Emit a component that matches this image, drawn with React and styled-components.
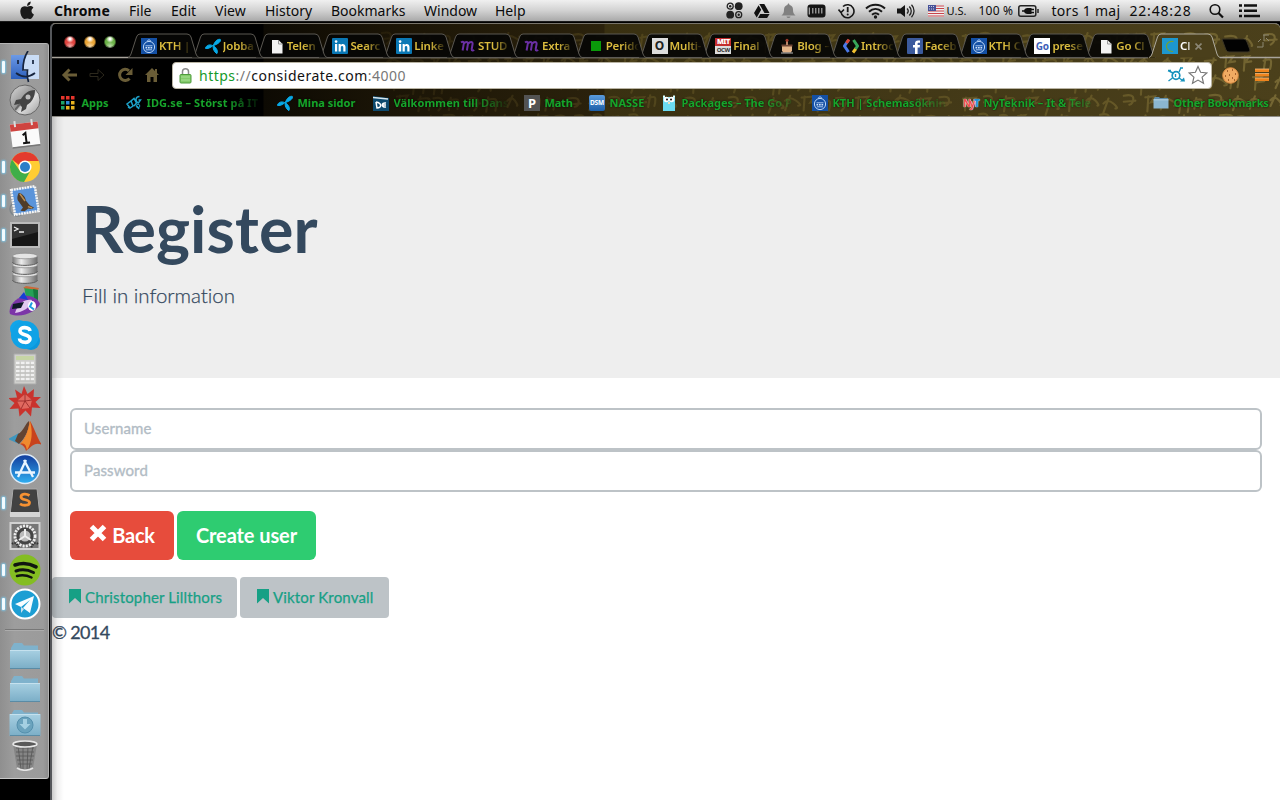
import React from "react";
import styled, { createGlobalStyle } from "styled-components";

const Global = createGlobalStyle`
  *{box-sizing:border-box}
  html,body{margin:0;padding:0;background:#000;overflow:hidden}
  svg{display:block;flex:none}
`;
const ui = `"Noto Sans","Open Sans",sans-serif`;
const lato = `Lato,"Liberation Sans",sans-serif`;

const Screen = styled.div`width:1280px;height:800px;background:#000;display:flex;flex-direction:column;overflow:hidden;`;

/* ---------- menu bar ---------- */
const MenuBar = styled.header`
  height:22px;flex:none;display:flex;align-items:center;padding-left:19px;
  background:linear-gradient(#f0f0f0,#d2d2d2 50%,#a9a9a9);border-bottom:1px solid #1b1b1b;
  font:14px/21px ${ui};color:#0b0b0b;
`;
const Slot = styled.div`
  width:${p => p.$w}px;flex:none;white-space:nowrap;display:flex;align-items:center;height:21px;
  font-size:${p => p.$size || 14}px;font-weight:${p => (p.$bold ? 700 : 400)};letter-spacing:${p => p.$ls || 0}px;
`;

/* ---------- desktop ---------- */
const Desktop = styled.div`flex:1;display:flex;min-height:0;`;
const DockColumn = styled.div`width:50px;flex:none;padding-top:21px;`;
const Dock = styled.nav`
  width:49px;height:736px;padding-top:6px;background:linear-gradient(90deg,#8f8f8f,#9d9d9d 30%,#9b9b9b 90%,#8d8d8d);
  border-top:1px solid #b5b5b5;border-right:1px solid #b2b2b2;border-bottom:1px solid #c8c8c8;
  border-radius:0 3px 3px 0;display:flex;flex-direction:column;
`;
const DockItem = styled.div`height:33.55px;flex:none;display:flex;align-items:center;`;
const Running = styled.i`
  width:3px;height:12px;margin:0 4px 0 2px;border-radius:1px;
  background:${p => (p.$on ? "#f2fbff" : "transparent")};box-shadow:${p => (p.$on ? "0 0 2px 1px #7cc4e4" : "none")};
`;
const DockRule = styled.div`height:17.6px;display:flex;align-items:center;padding:0 4px 0 5px;
  &::after{content:"";height:1px;flex:1;background:#777;box-shadow:0 1px #acacac;}`;

/* ---------- browser window ---------- */
const Window = styled.main`
  width:1230px;margin-top:1px;border-left:2px solid #55575b;border-top:1px solid #77736a;border-radius:5px 5px 0 0;
  display:flex;flex-direction:column;overflow:hidden;background:#fff;
`;
const Chrome = styled.div`
  height:93px;flex:none;display:grid;background:linear-gradient(90deg,#000 0 211px,#0d0a03 212px,#1a1406 330px,#2b220c 552px,#393011 553px,#413716 800px,#4b401b 1228px);
  border-bottom:1px solid #8d8b85;
  & > *{grid-area:1/1;}
`;
const ChromeRows = styled.div`display:flex;flex-direction:column;z-index:1;min-width:0;`;
const TabStrip = styled.div`height:34px;display:flex;align-items:flex-start;padding-left:12px;padding-top:9px;`;
const Lights = styled.div`display:flex;gap:8px;width:64px;padding-top:3px;`;
const Light = styled.i`
  width:12px;height:12px;border-radius:50%;border:1px solid rgba(0,0,0,.45);
  background:radial-gradient(circle at 50% 20%,#fff 0 8%,transparent 40%),radial-gradient(circle at 50% 95%,#fff9 0,transparent 45%),${p => p.$c};
`;
const TabItem = styled.div`
  width:63.82px;height:25px;flex:none;display:grid;z-index:${p => p.$z};position:relative;
  & > *{grid-area:1/1;}
`;
const TabBody = styled.div`
  display:flex;align-items:center;padding:1px 0 0 13px;z-index:1;
  font:600 11.5px/16px ${ui};color:${p => (p.$active ? "#fff" : "#dcbd3f")};
`;
const TabText = styled.span`
  margin-left:2px;white-space:nowrap;letter-spacing:-.15px;
  mask-image:linear-gradient(90deg,#000 16px,transparent 33px);
  ${p => p.$active && "mask-image:linear-gradient(90deg,#000 7px,transparent 14px);"}
`;
const TabX = styled.span`margin-left:5px;display:flex;`;
const AfterTabs = styled.div`display:flex;margin-left:8px;`;
const Toolbar = styled.div`height:32px;display:flex;align-items:center;padding:2px 0 0 8px;`;
const Nav = styled.div`display:flex;gap:11px;width:112px;padding-left:1px;align-items:center;`;
const Address = styled.div`
  width:1040px;height:27px;background:#fff;border:1px solid #b9b4a4;border-radius:4px;display:flex;align-items:center;
  padding:0 3px 0 6px;font:14px/24px ${ui};color:#777;letter-spacing:.5px;
  b{font-weight:400;color:#111} em{font-style:normal;color:#159a2b}
`;
const UrlText = styled.span`margin-left:7px;flex:1;padding-top:1px;`;
const Extras = styled.div`display:flex;align-items:center;gap:16px;margin-left:10px;`;
const Bookmarks = styled.div`height:26px;display:flex;align-items:center;padding:0 0 1px 9px;`;
const Mark = styled.div`
  width:${p => p.$w}px;flex:none;display:flex;align-items:center;
  font:700 11px/16px ${ui};color:#17a52b;text-shadow:0 0 2px #000;
`;
const MarkText = styled.span`
  margin-left:4.5px;white-space:nowrap;letter-spacing:${p => p.$ls || 0}px;
  ${p => p.$fade && "mask-image:linear-gradient(90deg,#000 78px,transparent 116px);"}
`;

/* ---------- page ---------- */
const Page = styled.div`
  flex:1;font-family:${lato};color:#34495e;font-variant-ligatures:none;
  background:#fff;display:grid;
  & > *{grid-area:1/1;}
`;
const PageShade = styled.div`z-index:2;width:12px;background:linear-gradient(90deg,rgba(0,0,0,.2),rgba(0,0,0,.06) 45%,transparent);`;
const PageBody = styled.div`display:flex;flex-direction:column;`;
const Hero = styled.section`height:261px;background:#eee;padding:72px 0 0 30px;`;
const Title = styled.h1`margin:0;font-size:64.5px;line-height:78px;font-weight:700;letter-spacing:.1px;`;
const Lead = styled.p`margin:13px 0 0;font-size:20.5px;line-height:30px;font-weight:300;-webkit-text-stroke:.25px #34495e;letter-spacing:-.04px;`;
const Form = styled.form`padding:30px 18px 0;`;
const Field = styled.input`
  display:block;width:100%;height:42px;border:2px solid #bdc3c7;border-radius:6px;padding:0 12px 2px;outline:0;
  font:15px/20px ${lato};&::placeholder{color:#b2bcc5;opacity:1;-webkit-text-stroke:.35px #b2bcc5;letter-spacing:.12px}
`;
const Actions = styled.div`display:flex;gap:3px;margin-top:19px;`;
const Action = styled.button`
  height:49px;width:${p => p.$w}px;border:0;border-radius:6px;background:${p => p.$bg};color:#fff;padding:0 0 2px;
  display:flex;align-items:center;justify-content:center;gap:5px;font:700 20px/24px ${lato};letter-spacing:${p => p.$ls}px;
`;
const People = styled.div`display:flex;gap:3px;margin-top:17px;`;
const Person = styled.a`
  height:41px;width:${p => p.$w}px;border-radius:4px;background:#bdc3c7;color:#16a085;
  display:flex;align-items:center;padding:0 0 2px 17px;gap:4px;font-size:15px;letter-spacing:.15px;-webkit-text-stroke:.25px #16a085;
`;
const Foot = styled.footer`font-size:18px;line-height:28px;letter-spacing:-.65px;-webkit-text-stroke:.3px #34495e;`;

/* ---------- icons ---------- */
const Svg = ({ s = 16, w, h, vb, children, ...r }) => (
  <svg width={w || s} height={h || s} viewBox={vb || `0 0 ${w || s} ${h || s}`} fill="none" {...r}>{children}</svg>
);

function glyphs() {
  let seed = 11;
  const rnd = () => ((seed = (seed * 16807) % 2147483647) / 2147483647);
  const rows = [18, 40, 60, 80, 99];
  let d = "";
  rows.forEach((y, r) => {
    for (let x = 330 + r * 5; x < 1228; x += 15 + rnd() * 9) {
      const t = y - 9 + rnd() * 4, h = 10 + rnd() * 6, w = 7 + rnd() * 6, k = Math.floor(rnd() * 4);
      if (k === 0) d += `M${x} ${t}q${w} -2 ${w} 3t-4 ${h - 5}M${x} ${t + 6}l${w + 2} -1`;
      if (k === 1) d += `M${x + 2} ${t}l-2 ${h}M${x} ${t + 3}q${w} -3 ${w} 1t-1 ${h - 5}`;
      if (k === 2) d += `M${x + 5} ${t}l-5 ${h}M${x} ${t + 5}q4 -5 ${w} 0t2 5`;
      if (k === 3) d += `M${x} ${t + 1}l${w} -1l-4 6l6 -1M${x + 3} ${t}l-1 ${h}`;
    }
  });
  return d;
}
const Texture = () => (
  <Svg w={1228} h={92}>
    <defs><linearGradient id="tx" gradientUnits="userSpaceOnUse" x1="330" y1="0" x2="1228" y2="0">
      <stop stopColor="#6a5723" stopOpacity=".15" /><stop offset=".3" stopColor="#7a6a2e" stopOpacity=".35" /><stop offset=".75" stopColor="#7a6a2e" stopOpacity=".5" /><stop offset="1" stopColor="#87773d" stopOpacity=".7" />
    </linearGradient></defs>
    <path d={glyphs()} stroke="url(#tx)" strokeWidth="2.100" strokeLinecap="round" />
    <path d="M0 33.500H1096M1168 33.500H1228" stroke="#a9a49c" strokeWidth="1.300" />
  </Svg>
);

const TabShape = ({ active }) => (
  <svg width="72" height="25" viewBox="0 0 72 25" style={{ overflow: "visible" }}>
    <path d="M0 24.500Q2 24 3 21L8.500 4Q9.500 1 12 1H59Q62 1 63 4L68 21Q69 24 71 24.500" fill={active ? "#4a3f1b" : "#060605"} fillOpacity={active ? 1 : .93} stroke={active ? "#b0aca0" : "#5b5852"} />
  </svg>
);

const Kth = () => <Svg><path fill="#1450a5" d="M0 0h16v16H0z" /><circle cx="8" cy="9" r="5.600" stroke="#b9d3f4" strokeWidth="1" /><path d="M4.500 7.800h7M5 11.800h6M6 2.500l2 1.300 2-1.300M8 1v2" stroke="#b9d3f4" strokeWidth=".9" /><path d="M4.500 9.800h7" stroke="#cfe2fa" strokeWidth="1.600" strokeDasharray="1.700 .8" /></Svg>;
const Telenor = () => <Svg><path d="M8.300 7.600C10 3 12.500.8 15.300 1.400c1.200 1.600-1.600 4.400-7 6.200ZM7.800 7.700C4.800 6 1.500 7 .3 10.300c2 .8 5.200-.4 7.500-2.600ZM8.200 7.500c-.5 3.200.8 6.200 3.600 8.200 1.600-2.200-.1-6-3.600-8.200Z" fill="#08a9e6" stroke="#08a9e6" /></Svg>;
const Doc = () => <Svg><path d="M3 2h6.500L13.500 6v9.500H3z" fill="#f3f3f3" /><path d="M9.500 2v4h4" stroke="#999" /></Svg>;
const LinkedIn = () => <Svg><rect width="16" height="16" rx="1" fill="#0a78b5" /><path d="M3 6h2.200v7.500H3zM6.600 6h2.100v1.200C9.800 5.200 13.500 5.400 13.500 9v4.500h-2.200V9.400c0-2-2.500-2-2.500 0v4.100H6.600z" fill="#fff" /><circle cx="4.100" cy="3.600" r="1.300" fill="#fff" /></Svg>;
const Emm = () => <Svg><path d="M1 4.500c2-1.500 3-.8 2.800 1.200L2.600 12.500M3.500 6c2-2.800 4.700-2.500 4.400 0l-1 6.500M8 6c2-2.800 5-2.500 4.600 0l-.9 5c-.2 1.800 1.300 1.800 2.500 1" stroke="#6a2fa3" strokeWidth="2" /></Svg>;
const Green = () => <Svg><path d="M3 3h10v10H3z" fill="#0a9a0a" /></Svg>;
const Badge = styled.span`
  width:16px;height:16px;flex:none;background:${p => p.$bg};color:${p => p.$c};text-align:center;overflow:hidden;border-radius:${p => p.$r || 0}px;
  font:700 ${p => p.$s}px/16px ${ui};letter-spacing:${p => p.$ls || 0}px;text-shadow:none;
`;
const Mit = styled.span`
  width:16px;height:16px;flex:none;display:grid;grid-template-rows:8px 8px;grid-template-columns:16px;text-align:center;font:700 7px/8px ${ui};letter-spacing:-.4px;
  b{background:#c42d2d;color:#fff} i{font-style:normal;background:#ddd;color:#333;font-size:6px;}
`;
const Cake = () => <Svg><path d="M3 8h10v4.500l-1 2H4l-1-2z" fill="#e3b489" /><path d="M2.500 6.500h11v2h-11z" fill="#6f4636" /><path d="M7 3h2v4H7z" fill="#b98467" /><circle cx="8" cy="2.200" r="1.500" fill="#9c3a2c" /><path d="M2 15h12" stroke="#bbb" /></Svg>;
const Intro = () => <Svg><path d="M5.500 2L1.500 8l4 6" stroke="#4b78e8" strokeWidth="3" /><path d="M6 1.500L3.500 5" stroke="#dd4634" strokeWidth="3" /><path d="M10 14.500l3-4" stroke="#f2c230" strokeWidth="3" /><path d="M10.500 2l4 6-2 3" stroke="#38a75a" strokeWidth="3" /></Svg>;
const Fb = () => <Svg><rect width="16" height="16" rx="1" fill="#3b5a9d" /><path d="M8 16V9.500H6V7h2V5.500C8 3.500 9.200 2.500 11 2.500h2v2.300h-1.300c-1 0-1.100.4-1.100 1.200V7H13l-.3 2.500h-2.100V16z" fill="#fff" /></Svg>;
const Cee = () => <Svg><path fill="#1d97ce" d="M0 0h16v16H0z" /><path d="M11.500 3.500C2.500 2 2 14 11 13.500" stroke="#779f31" strokeWidth="1.200" /></Svg>;

const tabs = [
  [<Kth />, "KTH |"], [<Telenor />, "Jobba"], [<Doc />, "Telen"], [<LinkedIn />, "Searc"], [<LinkedIn />, "Linke"],
  [<Emm />, "STUD"], [<Emm />, "Extra"], [<Green />, "Perido"], [<Badge $bg="#ddd" $c="#222" $s={12}>O</Badge>, "Multi-"],
  [<Mit><b>MIT</b><i>OCW</i></Mit>, "Final |"], [<Cake />, "Blog –"], [<Intro />, "Introc"], [<Fb />, "Faceb"], [<Kth />, "KTH C"],
  [<Badge $bg="#fff" $c="#3d60b8" $s={10}>Go</Badge>, "prese"], [<Doc />, "Go Cl"], [<Cee />, "Cl"],
];

const Folder = ({ s = 16 }) => <Svg s={s} vb="0 0 16 16"><path d="M1 3l1-1h4l1 1h8v2H1z" fill="#5f8ca8" /><path d="M.5 4.500h15V13.500H.5z" fill="#8bb7d0" /><path d="M.5 4.800h15" stroke="#b9d7e7" /></Svg>;
const Apps = () => <Svg>{[0, 1, 2].map(r => [0, 1, 2].map(c => <rect key={r + "" + c} x={c * 5} y={1 + r * 5} width="3.500" height="3.500" fill={[["#e5352c", "#e5352c", "#e5352c"], ["#1ea567", "#2f8bd8", "#e9b320"], ["#1ea567", "#e9b320", "#e9b320"]][r][c]} />))}</Svg>;
const Idg = () => <Svg><path d="M1 9l4-3 2 5-3 2zM5 6l3-2.500 2.500 4.500-2.500 3M13.500 1.500c-4.500 0-4.500 5.500-1 6.500l2-3-2 0M4 13l-2-1m9-1l2 3" stroke="#1da1c8" strokeWidth="1.500" /><circle cx="12" cy="11" r="1.800" stroke="#1da1c8" /></Svg>;
const Dse = () => <Svg><path d="M0 1l16 2v13H0z" fill="#0d496d" /><path d="M0 2.500L15 4" stroke="#d6e6ee" strokeWidth="1.500" /><path d="M3 7l1 6c5 0 5-5-1-6M13 8c-5-1-5 5 0 4M9 10h4" stroke="#fff" strokeWidth="1.500" /></Svg>;
const Gopher = () => <Svg><path d="M2 2h12v14H2z" fill="#6bdcf2" /><path d="M2 1.500h2M12 1.500h2" stroke="#dff" strokeWidth="2" /><circle cx="5.300" cy="4.500" r="2.700" fill="#fff" /><circle cx="10.700" cy="4.500" r="2.700" fill="#fff" /><circle cx="6" cy="4.500" r="1" fill="#111" /><circle cx="10" cy="4.500" r="1" fill="#111" /><path d="M7 7h2v2H7z" fill="#eee0c0" /></Svg>;
const NytBox = styled.span`width:16px;height:16px;flex:none;font:700 10px/16px ${ui};letter-spacing:-1.6px;color:#f04b4b;text-shadow:0 0 1px #fff,0 0 1px #fff;b{color:#218fd4}`;

const marks = [
  [65, <Apps />, "Apps"], [151, <Idg />, "IDG.se – Störst på IT", 1, .1], [96, <Telenor />, "Mina sidor"], [151, <Dse />, "Välkommen till Dans", 1, .1],
  [65, <Badge $bg="#535353" $c="#fff" $s={13}>P</Badge>, "Math", 0, -.2], [72, <Badge $bg="linear-gradient(#5a9bdc,#1c5ea8)" $c="#fff" $s={6.500} $r={2} $ls={-0.2}>DSM</Badge>, "NASSE"],
  [151, <Gopher />, "Packages – The Go P", 1], [151, <Kth />, "KTH | Schemasöknin", 1], [190, <NytBox>Ny<b>T</b></NytBox>, "NyTeknik – It & Tele", 1],
  [120, <Folder />, "Other Bookmarks", 0, -.15],
];

/* dock drawings share a 32 unit canvas */
const D = ({ children }) => <Svg s={32}>{children}</Svg>;
const DockFolder = ({ down }) => <D>
  <path d="M2 9l3-5h8l2 2.500h14V12H2z" fill="#7fb2cc" /><path d={down ? "M.5 8h31v22h-31z" : "M1 11h30v18.500H1z"} fill="url(#fold)" /><path d={down ? "M1 8.500h30" : "M1 11.500h30"} stroke="#c5e1ee" /><path d="M1 29.500h30" stroke="#5a8ba5" />
  {down && <g><circle cx="16" cy="19" r="8" fill="#6ba3bd" stroke="#5590ad" /><path d="M14 13h4v5h3.500L16 23.500 10.500 18H14z" fill="#a5d0e2" /></g>}
</D>;
const dock = [
  [1, <D><path d="M2 4h28v24H2z" fill="url(#find)" /><path d="M17 4h13v24H18.500l-.8-8H14c0-6 1-11 3-16z" fill="#c9dcf5" /><path d="M19 0c-4 6-5 12-5 19h4.500c-.5 5 0 9 1 12M7 22c6 4.500 13 4.500 19 0M9 9v4M24 9v4" stroke="#16243d" strokeWidth="1.700" /></D>],
  [0, <D><circle cx="16" cy="16" r="15" fill="url(#silver)" stroke="#666" /><path d="M26 6c-7 0-11 4-14 9l-5 1-2 5 5-1 3 3-1 5 5-3 1-4c5-3 8-8 8-15z" fill="#444" /><circle cx="19" cy="13" r="2.500" fill="#bbb" /><path d="M11 20l-5 6" stroke="#666" strokeWidth="2" /></D>],
  [0, <D><g transform="rotate(-7 16 16)"><path d="M2 5h28v23H2z" fill="#fafafa" /><path d="M2 5h28v7H2z" fill="#cf4440" /><path d="M2 28.500h28" stroke="#777" strokeWidth="1.500" /><path d="M7 2v6M24 2v6" stroke="#ddd" strokeWidth="2" /><path d="M13.500 17l3-2v10M13 25h7" stroke="#111" strokeWidth="2" /></g></D>],
  [1, <D><circle cx="16" cy="16" r="15" fill="#ffcd33" /><path d="M3 8.500A15 15 0 0 1 29.800 10H16a6.500 6.500 0 0 0-6 4z" fill="#e33b2e" /><path d="M3 8.500A15 15 0 0 0 15 31l6.500-11.500A6.500 6.500 0 0 1 10 18.500z" fill="#3fae49" /><circle cx="16" cy="16" r="6.500" fill="#fff" /><circle cx="16" cy="16" r="5" fill="#2b7fc8" /></D>],
  [1, <D><circle cx="8" cy="24" r="7" stroke="#7d868c" strokeWidth="1.500" /><g transform="rotate(-9 16 16)"><path d="M4 3h24v25H4z" fill="#5b94da" stroke="#f4f4f4" strokeWidth="2.500" strokeDasharray="2 .7" /><path d="M11 7c4 1 6 5 6 9l3 5 4 3-3 1-3-1-4 2-4-1 3-3-3-6c-2-3-1-6 1-9z" fill="#4f3c28" /><path d="M12 8l4 8M18 22l4 2" stroke="#b98d52" strokeWidth="1.500" /></g></D>],
  [1, <D><path d="M1 3h30v26H1z" fill="#bbb" /><path d="M3 5h26v22H3z" fill="#161616" /><path d="M3 5h26v8L3 20z" fill="#333" /><path d="M5 8l4 2-4 2M10 13h5" stroke="#eee" strokeWidth="1.300" /></D>],
  [0, <D>{[20, 11, 2].map(y => <g key={y}><path d={`M3.500 ${y + 2}v6c0 4.500 25 4.500 25 0v-6z`} fill="url(#metal)" /><path d={`M3.500 ${y + 8}c0 4.500 25 4.500 25 0`} stroke="#5e5e5e" /><ellipse cx="16" cy={y + 2} rx="12.500" ry="2.800" fill="#e4e4e4" stroke="#888" strokeWidth=".7" /></g>)}</D>],
  [0, <D><path d="M15 1l14 2v15l-10 3z" fill="#24a156" /><path d="M14 2l3-2 13 2-1 2z" fill="#c96a3a" /><path d="M24 3l5 1v14l-3 1z" fill="#157a3d" /><path d="M1 28c-2-7 4-15 14-18 8-1 14 3 16 8-3 7-18 15-30 10z" fill="#7c35a8" /><path d="M6 27c7-1 16-5 17-13-7-1-14 3-17 13z" fill="#e1c9ef" /><path d="M4 18l11-2-3 6-9 1z" fill="#101928" /><path d="M10 12l5-6 4 8z" fill="#173fd4" /><ellipse cx="23" cy="20" rx="4" ry="5" fill="#fff" /><path d="M23 16.500l-2 4 4 3" stroke="#1d9de0" strokeWidth="2" /></D>],
  [0, <D><circle cx="10" cy="10" r="9" fill="#10a5e9" /><circle cx="22" cy="22" r="9" fill="#0b97dc" /><circle cx="16" cy="16" r="14" fill="#0fa2e6" /><path d="M21 12c-.5-4-10-5-10 0 0 5 10 2.500 10 8 0 5-10.500 4-10.500-.5" stroke="#fff" strokeWidth="3.600" /></D>],
  [0, <D><path d="M5 1h22v30H5z" fill="#cfcfcc" stroke="#aaa" /><path d="M7 3h18v4H7z" fill="#c6d5a5" />{[10, 14, 18, 22, 26].map(y => <path key={y} d={`M7 ${y}h3.500m1.500 0h3.500m1.500 0h3.500m1.500 0h3`} stroke="#f0f0f0" strokeWidth="2.300" />)}<path d="M7 12h18M7 16h18M7 20h18M7 24h18M7 28h18" stroke="#aaa" strokeWidth=".6" /></D>],
  [0, <D><path d="M15 0l3.500 8 6.500-5-.5 8 7.500 0-5.500 5 5 6-8.500-.5-1 9-5.500-6-6 6-1-8-9 .5 5-6-6.500-5 9-.5-2-8 6.500 4.500z" fill="#c9332d" /><path d="M16 8l7 6-2 8-9 1-4-8z" fill="#e0695f" /><path d="M16 8v7l7-1m-7 1l5 7m-5-7l-4 8m4-8l-8 0" stroke="#912523" strokeWidth=".8" /></D>],
  [0, <D><path d="M-1 19l11-6 4 5-4 6z" fill="#3e96be" /><path d="M9 14c5-2 7-10 11-13 1 7-4 18-10 23l-4-3z" fill="#634332" /><path d="M21 1c4 6 7 17 12 24-7-4-11 2-16 6-1-4-3-6-6-7 6-5 8-14 10-23z" fill="#c8421d" /><path d="M21 1c-2 10-4 17-10 23 6-2 6 3 7 6 5-8 6-18 3-29z" fill="#f08a2e" /></D>],
  [0, <D><circle cx="16" cy="16" r="14.500" fill="url(#blueball)" stroke="#dceaf8" strokeWidth="1.500" /><path d="M9 24l8-17M15 7l9 17M6 19.500h20" stroke="#e9f5ff" strokeWidth="2.300" /></D>],
  [1, <D><path d="M4 2h24l3 27H1z" fill="#3c3c3c" stroke="#aaa" /><path d="M1 25h30v5H1z" fill="#d4d4d4" /><path d="M2.500 25L5 3h22l2.500 22z" fill="#424242" /><path d="M20.500 8.500c-3-2-8.500-2-8.500 1.500 0 3.500 8.500 2 8.500 5.500s-6.500 3.300-9.500 1.300" stroke="#f59132" strokeWidth="2.800" /></D>],
  [0, <D><path d="M1.500 3h29v26h-29z" fill="#777" stroke="#d2d2d2" strokeWidth="2" /><circle cx="16" cy="16" r="10" stroke="#eee" strokeWidth="3" strokeDasharray="2 1.200" /><circle cx="16" cy="16" r="7" stroke="#444" strokeWidth="3" fill="#bbb" /><path d="M16 9v7l6 4M16 16l-6 4" stroke="#eee" strokeWidth="2" /><path d="M3 24q4-3 7 4M29 24q-4-3-7 4" stroke="#333" strokeWidth="2" strokeDasharray="1.500 1" /></D>],
  [1, <D><circle cx="16" cy="16" r="15.500" fill="#84bd22" /><path d="M6 11c7-2.500 15-1.500 21 1.800" stroke="#101510" strokeWidth="3.600" strokeLinecap="round" /><path d="M7 17c6-2 12.500-1 17.500 1.500" stroke="#101510" strokeWidth="3" strokeLinecap="round" /><path d="M8 22c5-1.500 10-.8 14.500 1.500" stroke="#101510" strokeWidth="2.500" strokeLinecap="round" /></D>],
  [1, <D><circle cx="16" cy="16" r="14.500" fill="#1d9ed3" stroke="#fff" strokeWidth="2" /><path d="M6 16l19-8-4 17-7-5 7-8-9 7z" fill="#f8fdff" /><path d="M12 19v6l3-4z" fill="#c7dfec" /></D>],
];
const Trash = () => <D><path d="M4 5l4 24c4 3 12 3 16 0l4-24z" fill="#858585" /><path d="M7 9h18M7 13h18M7 17h18M8 21h16M9 25h14M9 7l3 23M14 7v24M19 7l-1 24M24 7l-4 23" stroke="#555" strokeWidth=".8" /><ellipse cx="16" cy="5" rx="12" ry="3" fill="#595959" stroke="#e7e7e7" strokeWidth="1.600" /><path d="M8 29c4 3 12 3 16 0" stroke="#e4e4e4" strokeWidth="1.600" /></D>;
const Defs = () => <defs>
  <linearGradient id="fold" x2="0" y2="1"><stop stopColor="#a8d0e2" /><stop offset="1" stopColor="#7baec7" /></linearGradient>
  <linearGradient id="find" x2="0" y2="1"><stop stopColor="#6d9ae6" /><stop offset="1" stopColor="#2c5fbb" /></linearGradient>
  <linearGradient id="silver" x2="1" y2="1"><stop stopColor="#ddd" /><stop offset=".45" stopColor="#999" /><stop offset=".6" stopColor="#ddd" /><stop offset="1" stopColor="#999" /></linearGradient>
  <linearGradient id="metal"><stop stopColor="#777" /><stop offset=".35" stopColor="#eee" /><stop offset="1" stopColor="#6b6b6b" /></linearGradient>
  <linearGradient id="blueball" x2="0" y2="1"><stop stopColor="#123b9c" /><stop offset="1" stopColor="#2fb0f2" /></linearGradient>
</defs>;

const Apple = () => <Svg w={16} h={20}><path d="M8.300 5.800C6.500 5 4.800 4.900 3.200 6.100c-3.400 2.600-1.800 9.400 1.500 11.700 1.300.8 2.300-.2 3.600-.2s2.400 1 3.700.1c1.400-1.100 2.300-2.700 2.900-4.300-2.900-1.300-3.200-5-.5-6.700C12.500 4.400 10.200 5 8.300 5.800ZM8.100 4.900C8 2.700 9.700.8 11.700.6c.2 2.200-1.500 4.200-3.600 4.300Z" fill="#1b1b1b" /></Svg>;

const Status = () => <>
  <Slot $w={28}><Svg s={17}><circle cx="4.200" cy="4.200" r="3" stroke="#222" strokeWidth="1.300" /><circle cx="4.200" cy="4.200" r="1.200" fill="#222" /><circle cx="12.700" cy="4.200" r="3.900" fill="#222" /><circle cx="4.200" cy="12.700" r="3.900" fill="#222" /><circle cx="12.700" cy="12.700" r="3" stroke="#222" strokeWidth="1.300" /><circle cx="12.700" cy="12.700" r="1.200" fill="#222" /></Svg></Slot>
  <Slot $w={27}><Svg><path d="M5.300 1h5l5.200 9h-5zM4.600 2.200L7.200 6.700 2.700 14.500 0 10zM6.300 11h9.300l-2.500 4H4z" fill="#111" /></Svg></Slot>
  <Slot $w={26}><Svg w={15}><path d="M.5 12.500c2-1.500 2.500-3 2.500-6C3 4 4.500 2.500 6.500 2c0-2 2-2 2 0C10.500 2.500 12 4 12 6.500c0 3 .5 4.500 2.500 6zM5.500 13.500h4c-.5 2-3.500 2-4 0z" fill="#808080" /></Svg></Slot>
  <Slot $w={31}><Svg w={19} h={14}><rect x=".5" y=".5" width="18" height="13" rx="3" fill="#151515" /><path d="M2.300 3.500v7M5.800 4v5.500M8.800 4v5.500M11.800 4v5.500M14.800 4v5.500" stroke="#bbb" strokeWidth="1.100" /></Svg></Slot>
  <Slot $w={27}><Svg w={18}><path d="M3 9A6.500 6.500 0 1 0 5 3.500M.5 6.500L3 9.500 6 6.500" stroke="#171717" strokeWidth="1.600" /><path d="M9.700 4v5.200" stroke="#171717" strokeWidth="1.800" /><circle cx="9.700" cy="11.500" r="1" fill="#171717" /></Svg></Slot>
  <Slot $w={32}><Svg w={21} h={16}><path d="M1 5.500c5.500-5 13.500-5 19 0M4 8.700c4-3.600 9-3.600 13 0M7 11.700c2.300-2 4.700-2 7 0" stroke="#181818" strokeWidth="2" /><circle cx="10.500" cy="14" r="1.700" fill="#181818" /></Svg></Slot>
  <Slot $w={31}><Svg w={18}><path d="M0 5.500h3.500L8 2v12l-4.500-3.500H0z" fill="#151515" /><path d="M10 5.500c1.500 1.500 1.500 3.500 0 5M12.300 3.500c2.600 2.600 2.600 6.400 0 9M14.500 1.800c3.400 3.700 3.400 8.700 0 12.400" stroke="#222" strokeWidth="1.300" /></Svg></Slot>
  <Slot $w={19}><Svg h={12}><path d="M0 0h16v12H0z" fill="#eee" /><path d="M0 1h16M0 3.500h16M0 6h16M0 8.500h16M0 11h16" stroke="#c8424a" strokeWidth="1.100" /><path d="M0 0h8v6H0z" fill="#465299" /><path d="M1 1.500h6M1 4h6" stroke="#ccd" strokeDasharray="1 1" /></Svg></Slot>
  <Slot $w={32} $size={11} $ls={0.1}>U.S.</Slot>
  <Slot $w={39} $size={12} $ls={0.2}>100 %</Slot>
  <Slot $w={34}><Svg w={21} h={12}><rect x=".8" y=".8" width="17" height="10.400" rx="2" stroke="#222" strokeWidth="1.500" /><path d="M20 4v4" stroke="#222" strokeWidth="1.500" /><path d="M4 6h2.500M13 4.500h3M13 7.500h3" stroke="#111" strokeWidth="1.400" /><path d="M13.500 3h-3C7 3 6 4.500 6 6s1 3 4.500 3h3z" fill="#111" /></Svg></Slot>
  <Slot $w={78} $ls={0.3}>tors 1 maj</Slot>
  <Slot $w={79} $ls={0.8}>22:48:28</Slot>
  <Slot $w={30}><Svg w={15}><circle cx="6" cy="6.500" r="4.800" stroke="#111" strokeWidth="1.600" /><path d="M9.500 10l4.500 4.500" stroke="#111" strokeWidth="2.200" /></Svg></Slot>
  <Svg w={22} h={14}><path d="M0 1.500h3M5 1.500h13M0 6.800h3M5 6.800h13M0 12h3M5 12h16" stroke="#111" strokeWidth="2.600" /></Svg>
</>;

const navc = "#6a5d37";
export default function App() {
  return (
    <Screen>
      <Global />
      <MenuBar>
        <Slot $w={35}><Apple /></Slot>
        <Slot $w={75} $bold $ls={0.2}>Chrome</Slot><Slot $w={42}>File</Slot><Slot $w={44}>Edit</Slot><Slot $w={50}>View</Slot>
        <Slot $w={66}>History</Slot><Slot $w={93}>Bookmarks</Slot><Slot $w={71}>Window</Slot><Slot $w={230.500}>Help</Slot>
        <Status />
      </MenuBar>
      <Desktop>
        <DockColumn>
          <Dock>
            {dock.map(([on, icon], i) => <DockItem key={i}><Running $on={on} />{icon}</DockItem>)}
            <DockRule />
            {[0, 0, 1].map((d, i) => <DockItem key={i}><Running /><DockFolder down={d} /></DockItem>)}
            <DockItem><Running /><Trash /></DockItem>
          </Dock>
          <Svg w={1} h={1}><Defs /></Svg>
        </DockColumn>
        <Window>
          <Chrome>
            <Texture />
            <ChromeRows>
              <TabStrip>
                <Lights><Light $c="#e0443f" /><Light $c="#eba536" /><Light $c="#6cb348" /></Lights>
                {tabs.map(([icon, text], i) => {
                  const active = i === 16;
                  return <TabItem key={i} $z={active ? 30 : 20 - i}>
                    <TabShape active={active} />
                    <TabBody $active={active}>{icon}<TabText $active={active}>{text}</TabText>
                      {active && <TabX><Svg s={7}><path d="M.5.5l6 6M6.500.5l-6 6" stroke="#8b8675" strokeWidth="1.600" /></Svg></TabX>}
                    </TabBody>
                  </TabItem>;
                })}
                <AfterTabs><Svg w={50} h={24}><path d="M1 6h22q2 0 3 3l3 8q0 2-2 2H8q-2 0-3-2z" fill="#020202" stroke="#3b3525" /><path d="M36 14h6M42 14V9M48 2h-6M43 2v6M37 9l3-3M48 8l-3-3" stroke="#8d8873" /></Svg></AfterTabs>
              </TabStrip>
              <Toolbar>
                <Nav>
                  <Svg w={17}><path d="M16 8H4M8.500 2.500L3 8l5.500 5.500" stroke={navc} strokeWidth="3" /></Svg>
                  <Svg w={17}><path d="M1 6.500h8V2.500L15 8l-6 5.500V9.500H1z" stroke="#2c281c" /></Svg>
                  <Svg w={16}><path d="M12.500 11.500A5.600 5.600 0 1 1 12 3.800" stroke={navc} strokeWidth="3" /><path d="M15.500 1v7H8.500z" fill={navc} /></Svg>
                  <Svg w={16}><path d="M8 1L1 8h2v7h3.500v-5h3v5H13V8h2l-2-2V2h-2v2z" fill={navc} /></Svg>
                </Nav>
                <Address>
                  <Svg w={13} h={17}><path d="M3.500 8V4.500C3.500.8 9.500.8 9.500 4.500V8" stroke="#8b8b8b" strokeWidth="1.500" /><rect x="1" y="7.500" width="11" height="8.500" rx="1" fill="#83cb6a" stroke="#4f9b3c" /><path d="M2 10h9M2 13h9" stroke="#a9df95" /></Svg>
                  <UrlText><em>https</em>://<b>considerate.com</b>:4000</UrlText>
                  <Svg w={18} h={18}><circle cx="9" cy="9.500" r="3.800" stroke="#1793bd" strokeWidth="1.700" /><path d="M8.500 8v3M6 7L1 4.500M1 4.500h3M5.500 12L1.500 15M12 6l2-4.500M12 12l3 2M13 2h3" stroke="#1793bd" strokeWidth="1.400" /><path d="M13 15.500l4-4 1 4z" fill="#1793bd" /></Svg>
                  <Svg w={20} h={20} style={{ marginLeft: 3 }}><path d="M10 1.500l2.600 5.800 6.200.6-4.700 4.200 1.400 6.200L10 15.100l-5.500 3.200 1.400-6.200L1.200 7.900l6.200-.6z" stroke="#777" strokeWidth="1.200" fill="#fff" /></Svg>
                </Address>
                <Extras>
                  <Svg w={17} h={17}><circle cx="8.500" cy="8.500" r="7.800" fill="#f0ab62" stroke="#d98c42" /><path d="M5 4h1M10 3h1M13 7h1M3 9h1M7 8h1M10 11h1M6 13h1M12 13h1" stroke="#8d4b1c" strokeWidth="1.300" /></Svg>
                  <Svg w={14} h={14}><path d="M0 2.500h14M0 7h14M0 11.500h14" stroke="#ef841d" strokeWidth="3" /><path d="M0 1h14M0 5.500h14M0 10h14" stroke="#f6bd80" strokeWidth=".8" /></Svg>
                </Extras>
              </Toolbar>
              <Bookmarks>
                {marks.map(([w, icon, text, fade, ls], i) => <Mark key={i} $w={w}>{icon}<MarkText $fade={fade} $ls={ls}>{text}</MarkText></Mark>)}
              </Bookmarks>
            </ChromeRows>
          </Chrome>
          <Page>
            <PageBody>
              <Hero><Title>Register</Title><Lead>Fill in information</Lead></Hero>
              <Form onSubmit={e => e.preventDefault()}>
                <Field placeholder="Username" /><Field type="password" placeholder="Password" />
                <Actions>
                  <Action type="button" $w={104} $bg="#e74c3c" $ls={-0.3}><Svg w={18} h={18} style={{ marginTop: -3 }}><path d="M2.500 2.500l13 13M15.500 2.500l-13 13" stroke="#fff" strokeWidth="5" /></Svg>Back</Action>
                  <Action $w={139} $bg="#2ecc71" $ls={-0.1}>Create user</Action>
                </Actions>
              </Form>
              <People>
                {[["Christopher Lillthors", 185], ["Viktor Kronvall", 149]].map(([n, w]) =>
                  <Person key={n} $w={w}><Svg w={12} h={16} style={{ marginTop: -1 }}><path d="M0 1h12v14.500L6 10l-6 5.500z" fill="#16a085" /></Svg>{n}</Person>)}
              </People>
              <Foot>© 2014</Foot>
            </PageBody>
            <PageShade />
          </Page>
        </Window>
      </Desktop>
    </Screen>
  );
}
